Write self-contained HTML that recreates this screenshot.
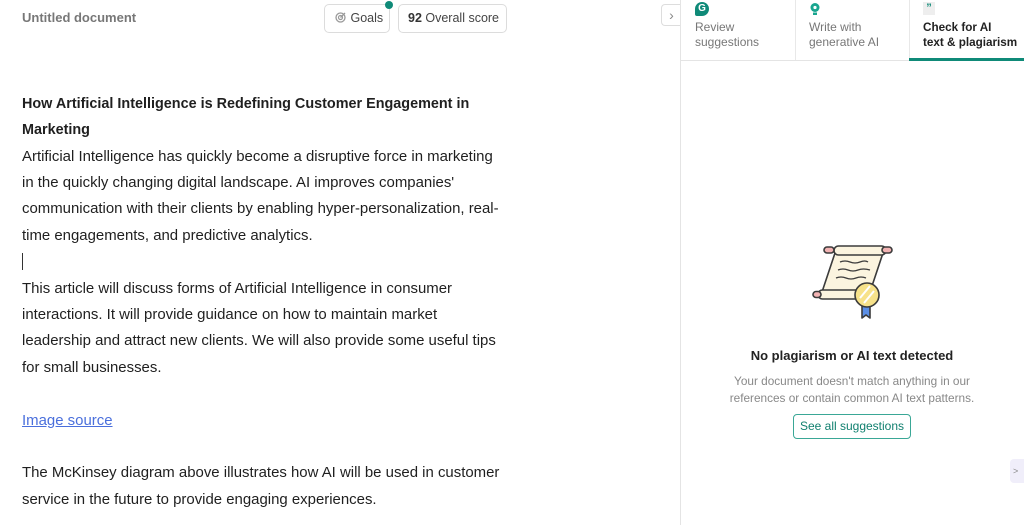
<!DOCTYPE html>
<html><head><style>
*{margin:0;padding:0;box-sizing:border-box}
body{width:1024px;height:525px;background:#fff;font-family:"Liberation Sans",sans-serif;position:relative;overflow:hidden;color:#222}
.a{position:absolute;white-space:nowrap}
.l{position:absolute;left:22px;font-size:14.95px;line-height:20px;color:#1f1f1f;white-space:nowrap}
.btn{position:absolute;top:4px;height:29px;border:1px solid #dcdcdc;border-radius:5px;font-size:12.5px;color:#444;line-height:27px}
.tab{position:absolute;top:1px;height:61px;font-size:12px;line-height:15px;color:#777}
</style></head><body>
<div class="a" style="left:22px;top:10px;font-size:13px;font-weight:bold;color:#777">Untitled document</div>
<div class="btn" style="left:324px;width:66px;padding-left:10px"><svg width="12" height="12" viewBox="0 0 12 12" style="vertical-align:-1px"><circle cx="5.5" cy="6.5" r="4.5" fill="none" stroke="#999" stroke-width="1.3"/><circle cx="5.5" cy="6.5" r="2" fill="none" stroke="#999" stroke-width="1.2"/><path d="M5.5 6.5L10 2" stroke="#999" stroke-width="1.3"/></svg> Goals</div>
<div class="a" style="left:385px;top:1px;width:8px;height:8px;border-radius:50%;background:#0f8a78"></div>
<div class="btn" style="left:398px;width:109px;padding-left:9px"><b style="color:#333">92</b> Overall score</div>
<div class="a" style="left:661px;top:4px;width:20px;height:22px;border:1px solid #ddd;border-right:none;border-radius:4px 0 0 4px;color:#888;font-size:14px;text-align:center;line-height:20px">&#8250;</div>
<div class="l" style="top:94px;font-weight:bold;font-size:14.4px">How Artificial Intelligence is Redefining Customer Engagement in</div>
<div class="l" style="top:120px;font-weight:bold;font-size:14.4px">Marketing</div>
<div class="l" style="top:147px">Artificial Intelligence has quickly become a disruptive force in marketing</div>
<div class="l" style="top:173px">in the quickly changing digital landscape. AI improves companies'</div>
<div class="l" style="top:199px">communication with their clients by enabling hyper-personalization, real-</div>
<div class="l" style="top:226px">time engagements, and predictive analytics.</div>
<div class="a" style="left:22px;top:253px;width:1px;height:17px;background:#333"></div>
<div class="l" style="top:279px">This article will discuss forms of Artificial Intelligence in consumer</div>
<div class="l" style="top:305px">interactions. It will provide guidance on how to maintain market</div>
<div class="l" style="top:331px">leadership and attract new clients. We will also provide some useful tips</div>
<div class="l" style="top:358px">for small businesses.</div>
<div class="l" style="top:411px;color:#4a6fdc;text-decoration:underline">Image source</div>
<div class="l" style="top:463px">The McKinsey diagram above illustrates how AI will be used in customer</div>
<div class="l" style="top:490px">service in the future to provide engaging experiences.</div>

<div class="a" style="left:680px;top:0;width:1px;height:525px;background:#e4e4e4"></div>
<div class="a" style="left:681px;top:60px;width:343px;height:1px;background:#e4e4e4"></div>
<div class="a" style="left:795px;top:0;width:1px;height:60px;background:#e8e8e8"></div>
<div class="a" style="left:909px;top:0;width:1px;height:60px;background:#e8e8e8"></div>
<div class="tab" style="left:695px"><div style="width:14px;height:14px;border-radius:50% 50% 50% 2px;background:#0f8a78;color:#fff;font-size:10px;font-weight:bold;text-align:center;line-height:14px;margin:1px 0 4px">G</div>Review<br>suggestions</div>
<div class="tab" style="left:809px"><svg width="12" height="15" viewBox="0 0 12 15" style="margin:1px 0 3px;display:block"><circle cx="6" cy="5.5" r="4.5" fill="#19a58f"/><circle cx="6" cy="5.5" r="1.6" fill="#fff"/><rect x="4" y="10.5" width="4" height="2.5" fill="#19a58f"/></svg>Write with<br>generative AI</div>
<div class="tab" style="left:923px;color:#222;font-weight:bold;font-size:11.7px"><div style="width:12px;height:13px;background:#eee;font-size:11px;color:#0f8a78;line-height:12px;margin:1px 0 5px;text-align:center">&#8221;</div>Check for AI<br>text &amp; plagiarism</div>
<div class="a" style="left:909px;top:58px;width:115px;height:3px;background:#0f8a78"></div>

<svg class="a" style="left:810px;top:240px" width="84" height="84" viewBox="0 0 84 84">
<g stroke="#3b3b3b" stroke-width="1.6" stroke-linejoin="round">
<path d="M26 10 L74 10 L58 58 L10 58 Z" fill="#fbf4df"/>
<rect x="24" y="6" width="52" height="9" rx="4.5" fill="#fbf4df"/>
<rect x="14" y="7" width="10" height="6" rx="3" fill="#f2b3b3"/>
<rect x="72" y="7" width="10" height="6" rx="3" fill="#f2b3b3"/>
<rect x="8" y="50" width="52" height="9" rx="4.5" fill="#fbf4df"/>
<rect x="3" y="51.5" width="8" height="6" rx="3" fill="#f2b3b3"/>
<path d="M30 22 q5-2 10 0 t10 0 t8 0 M28 30 q5-2 10 0 t10 0 t12 0 M26 38 q5-2 10 0 t10 0 t10 0" fill="none" stroke-width="1.3"/>
<path d="M52 62 L52 78 L56 75 L60 78 L60 62 Z" fill="#5b8fe6"/>
<circle cx="57" cy="55" r="12" fill="#f7e28a"/>
<path d="M50 58 L60 46 M54 63 L64 51" stroke="#fff" stroke-width="2"/>
</g></svg>

<div class="a" style="left:680px;top:348px;width:344px;text-align:center;font-size:13px;font-weight:bold;color:#222">No plagiarism or AI text detected</div>
<div class="a" style="left:680px;top:373px;width:344px;text-align:center;font-size:11.8px;line-height:17px;color:#888;white-space:normal">Your document doesn't match anything in our<br>references or contain common AI text patterns.</div>
<div class="a" style="left:793px;top:414px;width:118px;height:25px;border:1.5px solid #3aa796;border-radius:4px;text-align:center;font-size:12px;line-height:22px;color:#0f7f6e">See all suggestions</div>
<div class="a" style="left:1010px;top:459px;width:14px;height:24px;background:#f0eefa;border-radius:4px 0 0 4px;font-size:9px;color:#888;line-height:24px;padding-left:3px">&gt;</div>
</body></html>
